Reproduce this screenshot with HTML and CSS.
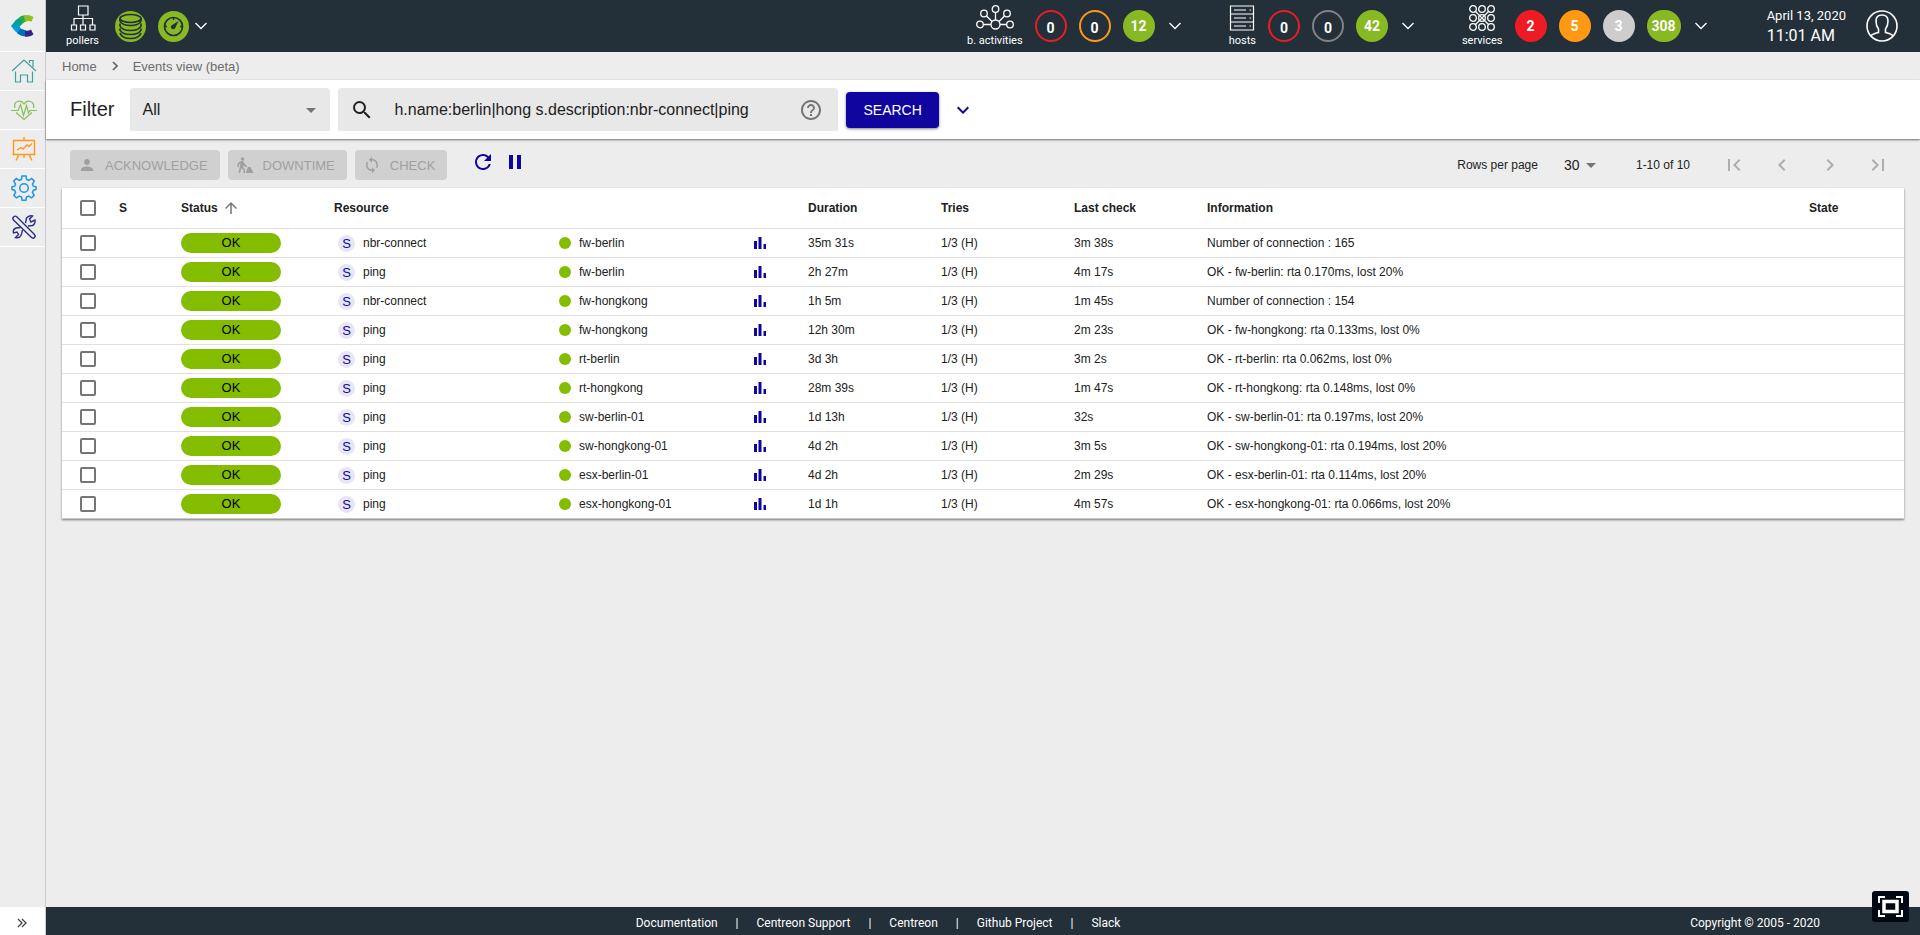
FILE: index.html
```html
<!DOCTYPE html>
<html lang="en">
<head>
<meta charset="UTF-8">
<meta name="viewport" content="width=device-width, initial-scale=1.0">
<title>Centreon - Events view</title>
<link rel="stylesheet" href="styles.css">
</head>
<body>

  <!-- shared icons -->
  <svg class="sprite" aria-hidden="true">
    <symbol id="chevron" viewBox="0 0 12 8"><path d="M.5 1L6 6.500 11.500 1" fill="none" stroke="currentColor" stroke-width="1.300"/></symbol>
    <symbol id="caret" viewBox="0 0 10 5"><path d="M0 0h10L5 5z" fill="currentColor"/></symbol>
    <symbol id="graph" viewBox="0 0 12 12"><path d="M0 4h3v8H0zM4.500 0h3v12h-3zM9.500 7H12v5H9.500z" fill="currentColor"/></symbol>
  </svg>

  <nav class="sidebar">
    <a class="sidebar__logo" href="#" aria-label="Centreon">
      <svg width="24" height="22" viewBox="0 0 24 22">
        <path d="M4 6L10 1 14 .3 16 6 13 7.500 9 11z" fill="#2fa84a"/>
        <path d="M13 .4Q18-.8 22.500 2L20.500 6.500Q17 5.500 14 7z" fill="#8cc21f"/>
        <path d="M0 11L5 5 9 3 11 8.500 8.500 11 8 13 3 13z" fill="#00a19a"/>
        <path d="M0 11H8.500L10 14.500 8 19.500 4 16z" fill="#009fe0"/>
        <path d="M6 18L9.500 13.500 15 15.500 15 21.500Q10 21.500 6 18z" fill="#0071b9"/>
        <path d="M14 15.500Q17 16.300 20 14.500L22.500 19.500Q18 22.500 14 21.500z" fill="#2a2a86"/>
      </svg>
    </a>
    <a class="sidebar__item" href="#" aria-label="Home">
      <svg width="26" height="26" viewBox="0 0 26 26" fill="none" stroke="#3ba39d" stroke-width="1.200">
        <path d="M1 13L13 2 25 13M4.500 13.500V24H9.500V17H16.500V24H21.500V13.500M18.500 5V2.500H22V9"/>
      </svg>
    </a>
    <a class="sidebar__item" href="#" aria-label="Monitoring">
      <svg width="26" height="26" viewBox="0 0 26 26" fill="none" stroke="#88c057" stroke-width="1.200">
        <path d="M4 11C2 4 10 2 13 7C16 2 24 4 22.500 11M5 15.500L13 22.500L21 15.500"/>
        <path d="M0 13.500H7L9.500 7.500 12.500 18.500 15.500 8.500 17.500 16 19 13.500H26"/>
      </svg>
    </a>
    <a class="sidebar__item" href="#" aria-label="Reporting">
      <svg width="26" height="26" viewBox="0 0 26 26" fill="none" stroke="#ff9913" stroke-width="1.400">
        <path d="M2.500 4.500H23.500V18.500H2.500zM13 1V4.500M6 14L10 11.500 12 13 16 9 18 10.500 21 7.500M1.500 18.500H24.500M8 18.500L5 24.500M18 18.500L21 24.500M13 18.500V22"/>
      </svg>
    </a>
    <a class="sidebar__item" href="#" aria-label="Configuration">
      <svg width="26" height="26" viewBox="0 1 26 26" fill="none" stroke="#1e95df" stroke-width="1.500">
        <path d="M11 2h4l.6 3.400 2.300 1L20.700 4.500l2.600 2.600-1.900 2.900 1 2.200 2.600.6v2.600l-2.600.8-1 2.200 1.700 2.900-2.500 2.600-2.900-1.900-2.200 1-.6 3.200h-3.800l-.6-3.200-2.200-1-2.900 1.900-2.500-2.600 1.700-2.900-1-2.200L1 15.400v-2.600l2.600-.6 1-2.200-1.900-2.900 2.600-2.600 2.900 1.900 2.200-1z"/>
        <circle cx="13" cy="14" r="4.300"/>
      </svg>
    </a>
    <a class="sidebar__item" href="#" aria-label="Administration">
      <svg width="26" height="26" viewBox="0 0 26 26" fill="none" stroke="#2b2f83" stroke-width="1.400">
        <path d="M3 2.500Q1 4 2.500 6L20 23Q22 25 23.500 23.500T23 20L6 3Q4.500 1.500 3 2.500z"/>
        <path d="M14.500 9L15.500 4Q18 1 21.500 2L18.500 5 20 8 24 6Q24.500 10 21.500 11.500L17 12M11.500 16L10.500 20Q9 24.500 4.500 23.500L7.500 20.500 6 18 2.500 19Q1.500 15.500 5 14L9.500 13.500"/>
      </svg>
    </a>
    <button class="sidebar__toggle" aria-label="Expand menu">
      <svg width="10" height="10" viewBox="0 0 10 10"><path d="M1 1l4 4-4 4M5 1l4 4-4 4" fill="none" stroke="#444" stroke-width="1.300"/></svg>
    </button>
  </nav>

  <div class="page">
    <header class="header">
      <div class="header__group header__group--pollers">
        <div class="header__label">
          <svg width="26" height="26" viewBox="0 0 26 26" fill="none" stroke="#fff" stroke-width="1.200">
            <path d="M8.500 1H18V10H8.500zM1.500 20H6.500V25H1.500zM10.500 20H15.500V25H10.500zM20 20H25V25H20zM13 10V20M4 20V13.500H22.500V20"/>
          </svg>
          <span>pollers</span>
        </div>
        <div class="poller-icons">
          <svg width="31" height="31" viewBox="0 0 31 31">
            <circle cx="15.500" cy="15.500" r="15.500" fill="#88b922"/>
            <g fill="none" stroke="#232f39" stroke-width="1.700">
              <ellipse cx="15.500" cy="7.500" rx="10.500" ry="4"/>
              <path d="M5 7.500V10Q7 14.500 15.500 14.500T26 10V7.500"/>
              <path d="M5 12.500V15Q7 19.500 15.500 19.500T26 15V12.500"/>
              <path d="M5 17.500V19Q7 23.500 15.500 23.500T26 19V17.500"/>
              <path d="M5 22Q7 27.500 15.500 27.500T26 22"/>
            </g>
          </svg>
          <svg width="31" height="31" viewBox="0 0 31 31">
            <circle cx="15.500" cy="15.500" r="15.500" fill="#88b922"/>
            <circle cx="15.500" cy="15.500" r="9" fill="none" stroke="#232f39" stroke-width="1.700"/>
            <path d="M15.500 6V9M6 15.500H9M22 15.500H25" stroke="#232f39" stroke-width="1.300"/>
            <path d="M20.500 10L17 17.500Q15 19 13.500 17.500T13.500 14.500z" fill="#232f39"/>
          </svg>
        </div>
        <svg class="header__chevron"><use href="#chevron"/></svg>
      </div>

      <div class="header__right">
        <div class="header__group">
          <div class="header__label">
            <svg width="38" height="26" viewBox="0 0 38 26" fill="none" stroke="#fff" stroke-width="1.300">
              <circle cx="19.500" cy="19.500" r="4.500"/><circle cx="19.500" cy="4" r="3.300"/><circle cx="8" cy="8.500" r="3.300"/>
              <circle cx="31" cy="8.500" r="3.300"/><circle cx="4" cy="19.500" r="3.300"/><circle cx="34" cy="19.500" r="3.300"/>
              <path d="M19.500 7.500V15M10.500 11L16 16.500M28.500 11L23 16.500M7.500 19.500H15M24 19.500H30.500"/>
            </svg>
            <span>b. activities</span>
          </div>
          <div class="counts">
            <span class="count count--outline count--red">0</span>
            <span class="count count--outline count--orange">0</span>
            <span class="count count--ok">12</span>
          </div>
          <svg class="header__chevron"><use href="#chevron"/></svg>
        </div>

        <div class="header__group">
          <div class="header__label">
            <svg width="26" height="26" viewBox="0 0 26 26" fill="none" stroke="#fff" stroke-width="1.200">
              <path d="M1.500 1H24.500V25H1.500zM1.500 9H24.500M1.500 17H24.500M5 5H17M5 13H17M5 21H17M20.500 5H22M20.500 13H22M20.500 21H22"/>
            </svg>
            <span>hosts</span>
          </div>
          <div class="counts">
            <span class="count count--outline count--red">0</span>
            <span class="count count--outline count--gray">0</span>
            <span class="count count--ok">42</span>
          </div>
          <svg class="header__chevron"><use href="#chevron"/></svg>
        </div>

        <div class="header__group">
          <div class="header__label">
            <svg width="26" height="26" viewBox="0 0 26 26" fill="none" stroke="#fff" stroke-width="1.300">
              <circle cx="4" cy="4" r="3.300"/><circle cx="13" cy="4" r="3.300"/><circle cx="22" cy="4" r="3.300"/>
              <circle cx="4" cy="13" r="3.300"/><circle cx="13" cy="13" r="3.300"/><circle cx="22" cy="13" r="3.300"/>
              <circle cx="4" cy="22" r="3.300"/><circle cx="13" cy="22" r="3.300"/><circle cx="22" cy="22" r="3.300"/>
              <path d="M6 6L20 20M20 6L6 20"/>
            </svg>
            <span>services</span>
          </div>
          <div class="counts">
            <span class="count count--critical">2</span>
            <span class="count count--warning">5</span>
            <span class="count count--unknown">3</span>
            <span class="count count--ok">308</span>
          </div>
          <svg class="header__chevron"><use href="#chevron"/></svg>
        </div>

        <div class="clock">
          <div class="clock__date">April 13, 2020</div>
          <div class="clock__time">11:01 AM</div>
        </div>
        <button class="user" aria-label="Profile">
          <svg width="32" height="32" viewBox="0 0 32 32" fill="none" stroke="#fff" stroke-width="1.600">
            <circle cx="16" cy="16" r="15"/>
            <path d="M5 26Q6 24 12.500 22.500V19Q10 16 10 11Q10 5 16 5T22 11Q22 16 19.500 19V22.500Q26 24 27 26"/>
          </svg>
        </button>
      </div>
    </header>

    <div class="breadcrumb">
      <a href="#">Home</a>
      <svg width="6" height="10" viewBox="0 0 6 10"><path d="M1 1l4 4-4 4" fill="none" stroke="#666" stroke-width="1.700"/></svg>
      <a href="#">Events view (beta)</a>
    </div>

    <form class="filter">
      <label class="filter__title" for="filter-select">Filter</label>
      <div class="filter__select">
        <select id="filter-select"><option>All</option></select>
        <svg class="caret"><use href="#caret"/></svg>
      </div>
      <div class="filter__search">
        <svg width="24" height="24" viewBox="0 0 24 24"><path fill="#212121" d="M15.500 14h-.79l-.28-.27A6.471 6.471 0 0 0 16 9.500 6.500 6.500 0 1 0 9.500 16c1.610 0 3.090-.59 4.230-1.570l.27.28v.79l5 4.990L20.490 19l-4.990-5zm-6 0C7.010 14 5 11.990 5 9.500S7.010 5 9.500 5 14 7.010 14 9.500 11.990 14 9.500 14z"/></svg>
        <input type="text" aria-label="Search" value="h.name:berlin|hong s.description:nbr-connect|ping">
        <svg width="24" height="24" viewBox="0 0 24 24"><path fill="#757575" d="M11 18h2v-2h-2v2zm1-16C6.480 2 2 6.480 2 12s4.480 10 10 10 10-4.480 10-10S17.520 2 12 2zm0 18c-4.410 0-8-3.590-8-8s3.590-8 8-8 8 3.590 8 8-3.590 8-8 8zm0-14c-2.210 0-4 1.790-4 4h2c0-1.100.9-2 2-2s2 .9 2 2c0 2-3 1.750-3 5h2c0-2.250 3-2.500 3-5 0-2.210-1.790-4-4-4z"/></svg>
      </div>
      <button class="filter__button" type="button">SEARCH</button>
      <button class="filter__expand" type="button" aria-label="More criteria">
        <svg width="24" height="24" viewBox="0 0 24 24"><path fill="currentColor" d="M7.410 8.590L12 13.170l4.590-4.580L18 10l-6 6-6-6z"/></svg>
      </button>
    </form>

    <main class="content">
      <div class="toolbar">
        <div class="toolbar__actions">
          <button class="action" disabled>
            <svg width="18" height="18" viewBox="0 0 24 24"><path fill="currentColor" d="M12 12c2.210 0 4-1.790 4-4s-1.790-4-4-4-4 1.790-4 4 1.790 4 4 4zm0 2c-2.670 0-8 1.340-8 4v2h16v-2c0-2.660-5.330-4-8-4z"/></svg>
            ACKNOWLEDGE
          </button>
          <button class="action" disabled>
            <svg width="18" height="18" viewBox="0 0 18 18" fill="currentColor"><circle cx="6.500" cy="3" r="1.800"/><path d="M4 5.500L7 5 9 8 11 10.500 10 11.500 7.500 9.500 7 11 9 13.500V17H7.500V14L5.500 12 4 17H2.500L4.500 7.500 3 8.500V11H1.500V7.500zM9.500 17L12 11H14.500L17.500 17z"/></svg>
            DOWNTIME
          </button>
          <button class="action" disabled>
            <svg width="18" height="18" viewBox="0 0 24 24"><path fill="currentColor" d="M12 4V1L8 5l4 4V6c3.310 0 6 2.690 6 6 0 1.010-.25 1.970-.7 2.800l1.460 1.460A7.930 7.930 0 0 0 20 12c0-4.420-3.580-8-8-8zm0 14c-3.310 0-6-2.690-6-6 0-1.010.25-1.970.7-2.800L5.240 7.740A7.930 7.930 0 0 0 4 12c0 4.420 3.580 8 8 8v3l4-4-4-4v3z"/></svg>
            CHECK
          </button>
          <div class="toolbar__icons">
            <button class="icon-button" aria-label="Refresh">
              <svg width="24" height="24" viewBox="0 0 24 24"><path fill="currentColor" d="M17.650 6.350A7.958 7.958 0 0 0 12 4c-4.420 0-7.990 3.580-7.990 8s3.570 8 7.990 8c3.730 0 6.840-2.550 7.730-6h-2.080A5.990 5.990 0 0 1 12 18c-3.310 0-6-2.690-6-6s2.690-6 6-6c1.660 0 3.140.69 4.220 1.780L13 11h7V4l-2.350 2.350z"/></svg>
            </button>
            <button class="icon-button" aria-label="Pause">
              <svg width="24" height="24" viewBox="0 0 24 24"><path fill="currentColor" d="M6 19h4V5H6v14zm8-14v14h4V5h-4z"/></svg>
            </button>
          </div>
        </div>
        <div class="pagination">
          <label for="rows">Rows per page</label>
          <div class="pagination__select">
            <select id="rows"><option>30</option></select>
            <svg class="caret"><use href="#caret"/></svg>
          </div>
          <span>1-10 of 10</span>
          <div class="pagination__nav">
            <button disabled aria-label="First page"><svg width="24" height="24" viewBox="0 0 24 24"><path fill="currentColor" d="M18.410 16.590L13.820 12l4.590-4.590L17 6l-6 6 6 6zM6 6h2v12H6z"/></svg></button>
            <button disabled aria-label="Previous page"><svg width="24" height="24" viewBox="0 0 24 24"><path fill="currentColor" d="M15.410 7.410L14 6l-6 6 6 6 1.410-1.410L10.830 12z"/></svg></button>
            <button disabled aria-label="Next page"><svg width="24" height="24" viewBox="0 0 24 24"><path fill="currentColor" d="M10 6L8.590 7.410 13.170 12l-4.580 4.590L10 18l6-6z"/></svg></button>
            <button disabled aria-label="Last page"><svg width="24" height="24" viewBox="0 0 24 24"><path fill="currentColor" d="M5.590 7.410L10.180 12l-4.590 4.590L7 18l6-6-6-6zM16 6h2v12h-2z"/></svg></button>
          </div>
        </div>
      </div>

      <table class="events">
        <colgroup>
          <col class="col-check"><col class="col-severity"><col class="col-status"><col class="col-resource"><col class="col-parent"><col class="col-graph">
          <col class="col-time"><col class="col-time"><col class="col-time"><col><col class="col-state">
        </colgroup>
        <thead>
          <tr>
            <th><input type="checkbox" aria-label="Select all"></th>
            <th>S</th>
            <th><span class="sort">Status <svg width="18" height="18" viewBox="0 0 24 24"><path fill="#757575" d="M4 12l1.410 1.410L11 7.830V20h2V7.830l5.580 5.590L20 12l-8-8-8 8z"/></svg></span></th>
            <th>Resource</th>
            <th></th>
            <th></th>
            <th>Duration</th>
            <th>Tries</th>
            <th>Last check</th>
            <th>Information</th>
            <th>State</th>
          </tr>
        </thead>
        <tbody>
          <tr>
            <td><input type="checkbox" aria-label="Select row"></td><td></td>
            <td><span class="status">OK</span></td>
            <td><span class="resource"><span class="badge">S</span>nbr-connect</span></td>
            <td><span class="parent"><i class="dot"></i>fw-berlin</span></td>
            <td><svg class="graph"><use href="#graph"/></svg></td>
            <td>35m 31s</td><td>1/3 (H)</td><td>3m 38s</td>
            <td>Number of connection : 165</td><td></td>
          </tr>
          <tr>
            <td><input type="checkbox" aria-label="Select row"></td><td></td>
            <td><span class="status">OK</span></td>
            <td><span class="resource"><span class="badge">S</span>ping</span></td>
            <td><span class="parent"><i class="dot"></i>fw-berlin</span></td>
            <td><svg class="graph"><use href="#graph"/></svg></td>
            <td>2h 27m</td><td>1/3 (H)</td><td>4m 17s</td>
            <td>OK - fw-berlin: rta 0.170ms, lost 20%</td><td></td>
          </tr>
          <tr>
            <td><input type="checkbox" aria-label="Select row"></td><td></td>
            <td><span class="status">OK</span></td>
            <td><span class="resource"><span class="badge">S</span>nbr-connect</span></td>
            <td><span class="parent"><i class="dot"></i>fw-hongkong</span></td>
            <td><svg class="graph"><use href="#graph"/></svg></td>
            <td>1h 5m</td><td>1/3 (H)</td><td>1m 45s</td>
            <td>Number of connection : 154</td><td></td>
          </tr>
          <tr>
            <td><input type="checkbox" aria-label="Select row"></td><td></td>
            <td><span class="status">OK</span></td>
            <td><span class="resource"><span class="badge">S</span>ping</span></td>
            <td><span class="parent"><i class="dot"></i>fw-hongkong</span></td>
            <td><svg class="graph"><use href="#graph"/></svg></td>
            <td>12h 30m</td><td>1/3 (H)</td><td>2m 23s</td>
            <td>OK - fw-hongkong: rta 0.133ms, lost 0%</td><td></td>
          </tr>
          <tr>
            <td><input type="checkbox" aria-label="Select row"></td><td></td>
            <td><span class="status">OK</span></td>
            <td><span class="resource"><span class="badge">S</span>ping</span></td>
            <td><span class="parent"><i class="dot"></i>rt-berlin</span></td>
            <td><svg class="graph"><use href="#graph"/></svg></td>
            <td>3d 3h</td><td>1/3 (H)</td><td>3m 2s</td>
            <td>OK - rt-berlin: rta 0.062ms, lost 0%</td><td></td>
          </tr>
          <tr>
            <td><input type="checkbox" aria-label="Select row"></td><td></td>
            <td><span class="status">OK</span></td>
            <td><span class="resource"><span class="badge">S</span>ping</span></td>
            <td><span class="parent"><i class="dot"></i>rt-hongkong</span></td>
            <td><svg class="graph"><use href="#graph"/></svg></td>
            <td>28m 39s</td><td>1/3 (H)</td><td>1m 47s</td>
            <td>OK - rt-hongkong: rta 0.148ms, lost 0%</td><td></td>
          </tr>
          <tr>
            <td><input type="checkbox" aria-label="Select row"></td><td></td>
            <td><span class="status">OK</span></td>
            <td><span class="resource"><span class="badge">S</span>ping</span></td>
            <td><span class="parent"><i class="dot"></i>sw-berlin-01</span></td>
            <td><svg class="graph"><use href="#graph"/></svg></td>
            <td>1d 13h</td><td>1/3 (H)</td><td>32s</td>
            <td>OK - sw-berlin-01: rta 0.197ms, lost 20%</td><td></td>
          </tr>
          <tr>
            <td><input type="checkbox" aria-label="Select row"></td><td></td>
            <td><span class="status">OK</span></td>
            <td><span class="resource"><span class="badge">S</span>ping</span></td>
            <td><span class="parent"><i class="dot"></i>sw-hongkong-01</span></td>
            <td><svg class="graph"><use href="#graph"/></svg></td>
            <td>4d 2h</td><td>1/3 (H)</td><td>3m 5s</td>
            <td>OK - sw-hongkong-01: rta 0.194ms, lost 20%</td><td></td>
          </tr>
          <tr>
            <td><input type="checkbox" aria-label="Select row"></td><td></td>
            <td><span class="status">OK</span></td>
            <td><span class="resource"><span class="badge">S</span>ping</span></td>
            <td><span class="parent"><i class="dot"></i>esx-berlin-01</span></td>
            <td><svg class="graph"><use href="#graph"/></svg></td>
            <td>4d 2h</td><td>1/3 (H)</td><td>2m 29s</td>
            <td>OK - esx-berlin-01: rta 0.114ms, lost 20%</td><td></td>
          </tr>
          <tr>
            <td><input type="checkbox" aria-label="Select row"></td><td></td>
            <td><span class="status">OK</span></td>
            <td><span class="resource"><span class="badge">S</span>ping</span></td>
            <td><span class="parent"><i class="dot"></i>esx-hongkong-01</span></td>
            <td><svg class="graph"><use href="#graph"/></svg></td>
            <td>1d 1h</td><td>1/3 (H)</td><td>4m 57s</td>
            <td>OK - esx-hongkong-01: rta 0.066ms, lost 20%</td><td></td>
          </tr>
        </tbody>
      </table>
    </main>

    <footer class="footer">
      <ul class="footer__links">
        <li><a href="#">Documentation</a></li>
        <li><a href="#">Centreon Support</a></li>
        <li><a href="#">Centreon</a></li>
        <li><a href="#">Github Project</a></li>
        <li><a href="#">Slack</a></li>
      </ul>
      <span>Copyright © 2005 - 2020</span>
    </footer>
  </div>

  <button class="fullscreen" aria-label="Full screen">
    <svg width="25" height="21" viewBox="0 0 25 21" fill="none" stroke="#fff">
      <path d="M1 7V1H7M18 1H24V7M24 14V20H18M7 20H1V14" stroke-width="2"/>
      <path d="M6 5.500H19V15.500H6z" stroke-width="3.500"/>
    </svg>
  </button>

</body>
</html>
```
FILE: styles.css
```css
* {
  box-sizing: border-box;
}

body {
  margin: 0;
  display: flex;
  min-height: 100vh;
  background-color: #ededed;
  color: #212121;
  font-family: "Liberation Sans", Arial, sans-serif;
  font-size: 12px;
}

a {
  color: inherit;
  text-decoration: none;
}

svg {
  display: block;
  flex-shrink: 0;
}

button {
  margin: 0;
  padding: 0;
  border: none;
  background: none;
  color: inherit;
  font-family: inherit;
  cursor: pointer;
}

button:disabled {
  cursor: default;
}

select, input {
  font-family: inherit;
  color: inherit;
}

.sprite {
  position: absolute;
  width: 0;
  height: 0;
}

/* sidebar */
.sidebar {
  display: flex;
  flex-direction: column;
  flex-shrink: 0;
  width: 46px;
  border-right: 1px solid #cccccc;
}

.sidebar__logo,
.sidebar__item {
  display: flex;
  align-items: center;
  justify-content: center;
  height: 39px;
  padding-left: 3px;
  border-bottom: 1px solid #fff;
}

.sidebar__logo {
  height: 52px;
  padding-left: 0;
}

.sidebar__toggle {
  display: flex;
  align-items: center;
  justify-content: center;
  height: 28px;
  margin-top: auto;
  padding: 3px 2px 0 0;
  background-color: #fff;
}

.page {
  display: flex;
  flex-direction: column;
  flex: 1;
  min-width: 0;
}

/* header */
.header {
  display: flex;
  justify-content: space-between;
  height: 52px;
  padding: 0 22px 0 20px;
  background-color: #232f39;
  color: #fff;
  font-family: Roboto, sans-serif;
}

.header__right {
  display: flex;
  align-items: center;
  gap: 48px;
}

.header__group {
  display: flex;
  align-items: center;
  gap: 12px;
}

.header__group--pollers {
  gap: 6px;
}

.header__label {
  display: flex;
  flex-direction: column;
  align-items: center;
  gap: 3px;
  font-size: 11px;
  line-height: 13px;
}

.poller-icons {
  display: flex;
  gap: 12px;
  padding-left: 10px;
}

.header__chevron {
  width: 12px;
  height: 8px;
}

.counts {
  display: flex;
  gap: 12px;
}

.counts + .header__chevron {
  margin-left: 2px;
}

.count {
  min-width: 32px;
  height: 32px;
  padding: 0 5px;
  border-radius: 16px;
  font-size: 14px;
  font-weight: 700;
  line-height: 32px;
  text-align: center;
}

.count--outline {
  border: 2px solid;
  padding: 0;
}

.count--red { border-color: #ed1c24; }
.count--orange { border-color: #ff9913; }
.count--gray { border-color: #818285; }
.count--ok { background-color: #88b922; }
.count--critical { background-color: #ed1c24; }
.count--warning { background-color: #ff9913; }
.count--unknown { background-color: #cdcdcd; }

.clock {
  margin-left: 12px;
}

.clock__date {
  font-size: 13px;
  line-height: 20px;
}

.clock__time {
  font-size: 16px;
  line-height: 20px;
}

.user {
  margin-left: -28px;
}

/* breadcrumb */
.breadcrumb {
  display: flex;
  align-items: center;
  gap: 15px;
  height: 28px;
  padding: 0 16px;
  color: #6b6b6b;
  font-size: 13px;
}

/* filter */
.filter {
  display: flex;
  align-items: center;
  gap: 8px;
  height: 59px;
  padding: 0 24px;
  background-color: #fff;
  box-shadow: 0 1px 2px rgba(0, 0, 0, 0.55);
}

.filter__title {
  margin-right: 8px;
  font-size: 20px;
}

.filter__select,
.filter__search {
  height: 43px;
  border-radius: 4px 4px 0 0;
  background-color: #e8e8e8;
}

.filter__select {
  position: relative;
  width: 200px;
}

.filter select,
.pagination select {
  width: 100%;
  height: 100%;
  border: none;
  background: none;
  appearance: none;
}

.filter select {
  padding: 0 12px;
  font-size: 16px;
}

.caret {
  position: absolute;
  top: calc(50% - 2px);
  right: 14px;
  width: 10px;
  height: 5px;
  color: #757575;
  pointer-events: none;
}

.filter__search {
  display: flex;
  align-items: center;
  width: 500px;
  padding: 0 15px 0 12px;
}

.filter__search input {
  flex: 1;
  min-width: 0;
  padding: 0 20px;
  border: none;
  outline: none;
  background: none;
  font-size: 16px;
}

.filter__button {
  height: 36px;
  padding: 0 17px;
  border-radius: 4px;
  background-color: #10069f;
  box-shadow: 0 1px 3px rgba(0, 0, 0, 0.5);
  color: #fff;
  font-size: 14px;
}

.filter__expand {
  margin-left: 4px;
  color: #10069f;
}

/* content */
.content {
  flex: 1;
  padding: 0 16px;
}

.toolbar {
  display: flex;
  align-items: center;
  justify-content: space-between;
  height: 49px;
  padding: 3px 2px 0 8px;
}

.toolbar__actions {
  display: flex;
  gap: 8px;
}

.action {
  display: flex;
  align-items: center;
  gap: 9px;
  height: 30px;
  padding: 0 12px 0 8px;
  border-radius: 4px;
  background-color: #d0d0d0;
  color: #a0a0a0;
  font-size: 13px;
}

.toolbar__icons {
  display: flex;
  gap: 8px;
  padding-left: 16px;
}

.icon-button {
  height: 24px;
  color: #10069f;
}

.pagination {
  display: flex;
  align-items: center;
}

.pagination__select {
  position: relative;
  width: 48px;
  height: 24px;
  margin: 0 32px 0 18px;
}

.pagination select {
  padding: 0 8px;
  font-size: 14px;
}

.pagination .caret {
  right: 8px;
}

.pagination__nav {
  display: flex;
  margin-left: 20px;
  color: #adadad;
}

.pagination__nav button {
  padding: 0 12px;
}

/* events table */
.events {
  width: 100%;
  border-collapse: separate;
  border-spacing: 0;
  table-layout: fixed;
  background-color: #fff;
  box-shadow: 0 1px 2px rgba(0, 0, 0, 0.5);
}

.col-check { width: 57px; }
.col-severity { width: 62px; }
.col-status { width: 153px; }
.col-resource { width: 225px; }
.col-parent { width: 195px; }
.col-graph { width: 54px; }
.col-time { width: 133px; }
.col-state { width: 95px; }

.events th,
.events td {
  height: 29px;
  padding: 0;
  border-bottom: 1px solid #e0e0e0;
  line-height: 16px;
  text-align: left;
}

.events th {
  height: 41px;
}

.events tbody tr:last-child td {
  border-bottom-color: #c8c8c8;
}

.events input {
  display: block;
  width: 16px;
  height: 16px;
  margin: 0 0 0 18px;
  border: 2px solid #757575;
  border-radius: 2px;
  appearance: none;
}

.sort {
  display: flex;
  align-items: center;
  gap: 4px;
}

.status {
  display: block;
  width: 100px;
  height: 20px;
  border-radius: 10px;
  background-color: #84bd00;
  color: #000;
  font-size: 13px;
  line-height: 20px;
  text-align: center;
}

.resource,
.parent {
  display: flex;
  align-items: center;
  gap: 8px;
}

.resource {
  padding-left: 4px;
}

.badge {
  width: 17px;
  height: 17px;
  border-radius: 50%;
  background-color: #e7e6f5;
  color: #10069f;
  font-size: 13px;
  line-height: 17px;
  text-align: center;
}

.dot {
  width: 12px;
  height: 12px;
  border-radius: 50%;
  background-color: #84bd00;
}

.graph {
  width: 12px;
  height: 12px;
  color: #10069f;
}

/* footer */
.footer {
  display: flex;
  align-items: center;
  height: 28px;
  padding: 4px 100px 0 20px;
  background-color: #232f39;
  color: #fff;
  font-family: Roboto, sans-serif;
  font-size: 12px;
}

.footer__links {
  display: flex;
  margin: 0 auto;
  padding: 0;
  list-style: none;
}

.footer__links li + li::before {
  content: "|";
  margin: 0 18px;
}

.fullscreen {
  position: fixed;
  right: 11px;
  bottom: 13px;
  display: flex;
  align-items: center;
  justify-content: center;
  width: 37px;
  height: 31px;
  border-radius: 3px;
  background-color: #000814;
}
```
